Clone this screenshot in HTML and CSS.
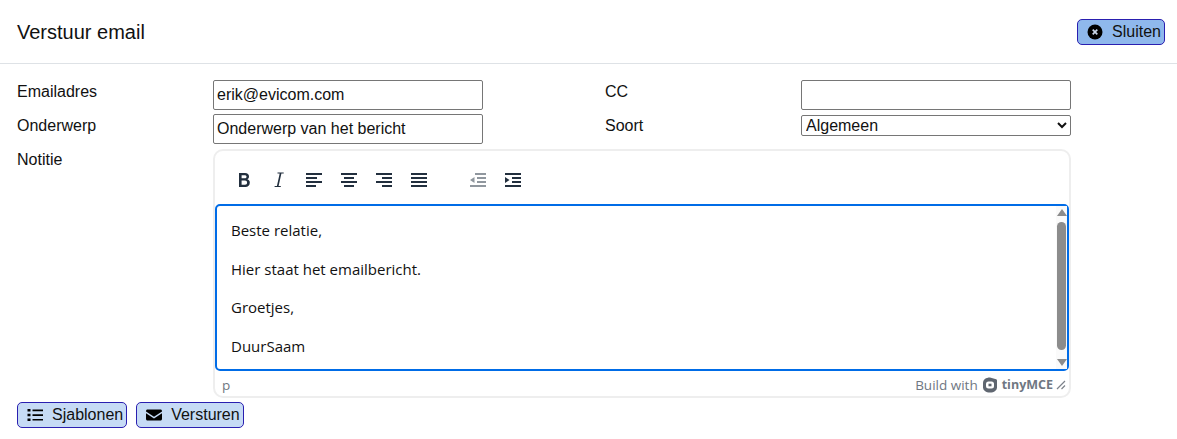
FILE: index.html
```html
<!DOCTYPE html>
<html lang="nl">

<head>
    <meta charset="UTF-8">
    <meta name="viewport" content="width=device-width, initial-scale=1.0">
    <title>Verstuur email</title>
    <link rel="stylesheet" href="styles.css">
</head>

<body>
    <header class="header">
        <h1 class="title">Verstuur email</h1>
        <button class="btn btn-close" type="button">
            <svg class="btn-icon" viewBox="0 0 16 16" width="16" height="16">
                <circle cx="8" cy="8" r="7.5" fill="#000" />
                <path d="M5.7 5.7l4.600 4.600M10.300 5.700l-4.600 4.600" stroke="#c9d6e8" stroke-width="1.700" fill="none" />
            </svg>
            Sluiten
        </button>
    </header>

    <form class="form">
        <label class="label">Emailadres</label>
        <input class="field" type="text" value="erik@evicom.com">
        <label class="label">CC</label>
        <input class="field" type="text">

        <label class="label">Onderwerp</label>
        <input class="field" type="text" value="Onderwerp van het bericht">
        <label class="label">Soort</label>
        <select class="field-select">
            <option>Algemeen</option>
        </select>

        <label class="label">Notitie</label>
        <div class="editor">
            <div class="toolbar">
                <div class="tool-group">
                    <span class="tool">
                        <svg viewBox="0 0 24 24" width="24" height="24"><path fill-rule="evenodd" d="M7 6h6c2.600 0 4 1.300 4 3.400 0 1.300-.6 2.300-1.700 2.800 1.500.5 2.500 1.600 2.500 3.200 0 2.800-1.700 4.600-4.500 4.600H7zM9.600 8.200v3.100h3c1.200 0 1.900-.6 1.900-1.600 0-1-.7-1.500-1.900-1.500zM9.600 13.500v4.300h3.400c1.300 0 2.100-.8 2.100-2.200 0-1.300-.8-2.100-2.100-2.100z" fill="#222f3e" /></svg>
                    </span>
                    <span class="tool">
                        <svg viewBox="0 0 24 24" width="24" height="24"><path d="M10.500 5.500h6.200v1h-2.300L11.600 19h2.200v1H7.600v-1h2.300l2.800-12.500h-2.200z" fill="#222f3e" /></svg>
                    </span>
                    <span class="tool">
                        <svg viewBox="0 0 24 24" width="24" height="24"><path d="M4 6h16v2H4zM4 10h11v2H4zM4 14h16v2H4zM4 18h10v2H4z" fill="#222f3e" /></svg>
                    </span>
                    <span class="tool">
                        <svg viewBox="0 0 24 24" width="24" height="24"><path d="M4 6h16v2H4zM7 10h10v2H7zM4 14h16v2H4zM7 18h10v2H7z" fill="#222f3e" /></svg>
                    </span>
                    <span class="tool">
                        <svg viewBox="0 0 24 24" width="24" height="24"><path d="M4 6h16v2H4zM10 10h10v2H10zM4 14h16v2H4zM10 18h10v2H10z" fill="#222f3e" /></svg>
                    </span>
                    <span class="tool">
                        <svg viewBox="0 0 24 24" width="24" height="24"><path d="M4 6h16v2H4zM4 10h16v2H4zM4 14h16v2H4zM4 18h16v2H4z" fill="#222f3e" /></svg>
                    </span>
                </div>
                <div class="tool-group">
                    <span class="tool">
                        <svg viewBox="0 0 24 24" width="24" height="24"><path d="M9 6h11v2H9zM11 10h9v2h-9zM11 14h9v2h-9zM4 18h16v2H4zM8.500 10v6L4 13z" fill="#222f3e" fill-opacity=".5" /></svg>
                    </span>
                    <span class="tool">
                        <svg viewBox="0 0 24 24" width="24" height="24"><path d="M4 6h16v2H4zM11 10h9v2h-9zM11 14h9v2h-9zM4 18h16v2H4zM4 10v6l4.500-3z" fill="#222f3e" /></svg>
                    </span>
                </div>
            </div>

            <div class="edit-area">
                <div class="edit-text">
                    <p>Beste relatie,</p>
                    <p>Hier staat het emailbericht.</p>
                    <p>Groetjes,</p>
                    <p>DuurSaam</p>
                </div>
                <div class="scrollbar">
                    <span class="arrow-up"></span>
                    <span class="thumb"></span>
                    <span class="arrow-down"></span>
                </div>
            </div>

            <div class="statusbar">
                <span class="path">p</span>
                <span class="brand">
                    Build with
                    <svg class="brand-logo" viewBox="0 0 16 16" width="16" height="16">
                        <path d="M8 .5 14.200 2.300c.5.2.8.6.8 1.200v6.700c0 3.100-2.800 5.300-7 5.300s-7-2.200-7-5.300V6C1 2.700 3.800.5 8 .5z" fill="#5f6670" />
                        <rect x="4" y="4.500" width="8" height="7" rx="2.500" fill="#fff" />
                        <rect x="6.500" y="6.700" width="3" height="2.600" fill="#5f6670" />
                    </svg>
                    <span class="brand-name">tinyMCE</span>
                </span>
                <svg class="resize" viewBox="0 0 10 10" width="10" height="10">
                    <path d="M1 9 9 1M5.500 9 9 5.500" stroke="#7c828a" stroke-width="1.200" fill="none" />
                </svg>
            </div>
        </div>
    </form>

    <div class="actions">
        <button class="btn" type="button">
            <svg class="btn-icon" viewBox="0 0 16 16" width="16" height="16">
                <path d="M.5 2h3v2.500h-3zM.5 6.800h3v2.500h-3zM.5 11.500h3V14h-3zM5.500 2.500H16v1.700H5.500zM5.500 7.200H16v1.700H5.500zM5.500 11.900H16v1.700H5.500z" fill="#000" />
            </svg>
            Sjablonen
        </button>
        <button class="btn" type="button">
            <svg class="btn-icon" viewBox="0 0 16 16" width="16" height="16">
                <path d="M1.500 2.500h13c.8 0 1.500.7 1.500 1.500v.4L8 9.700 0 4.400V4c0-.8.7-1.500 1.500-1.500zM0 6.200l8 5.200 8-5.200V12c0 .8-.7 1.500-1.500 1.500h-13C.7 13.500 0 12.800 0 12z" fill="#000" />
            </svg>
            Versturen
        </button>
    </div>
</body>

</html>
```

FILE: styles.css
```css
* {
    box-sizing: border-box;
}

body {
    margin: 0;
    background-color: #fff;
    color: #111;
    font-family: "Liberation Sans", Arial, sans-serif;
    font-size: 16px;
}

.header {
    display: flex;
    justify-content: space-between;
    align-items: center;
    height: 64px;
    padding: 0 12px 0 17px;
    border-bottom: 1px solid #dee2e6;
}

.title {
    margin: 0;
    padding-top: 2px;
    font-size: 20px;
    font-weight: 400;
}

.btn {
    display: inline-flex;
    align-items: center;
    gap: 9px;
    height: 26px;
    padding: 0 3px 0 9px;
    border: 1px solid #2a1fb0;
    border-radius: 5px;
    background-color: #c6dbf5;
    color: #111;
    font-family: inherit;
    font-size: 16px;
}

.btn-close {
    background-color: #8fb8ec;
}

.btn-icon {
    flex-shrink: 0;
}

.form {
    display: grid;
    grid-template-columns: 196px 270px 122px 196px 270px;
    grid-auto-rows: min-content;
    row-gap: 4px;
    padding: 16px 0 0 17px;
}

.form .label:nth-of-type(even) {
    grid-column: 4;
}

.label {
    padding-top: 3px;
}

.field {
    width: 100%;
    height: 30px;
    padding: 1px 3px;
    border: 1px solid #767676;
    border-radius: 2px;
    background-color: #fff;
    color: #111;
    font-family: inherit;
    font-size: 16px;
}

.field-select {
    width: 100%;
    height: 21px;
    margin-top: 1px;
    border: 1px solid #767676;
    border-radius: 2px;
    background-color: #fff;
    color: #111;
    font-family: inherit;
    font-size: 16px;
}

.editor {
    grid-column: 2 / 6;
    display: flex;
    flex-direction: column;
    width: 858px;
    height: 249px;
    margin-top: 1px;
    border: 2px solid #eee;
    border-radius: 10px;
    overflow: hidden;
}

.toolbar {
    display: flex;
    gap: 35px;
    height: 53px;
    padding: 16px 0 0 17px;
}

.tool-group {
    display: flex;
    gap: 11px;
}

.tool {
    display: block;
    width: 24px;
    height: 24px;
}

.tool svg {
    display: block;
}

.edit-area {
    display: flex;
    height: 167px;
    border: 2px solid #006ce7;
    border-radius: 5px;
}

.edit-text {
    flex: 1;
    padding: 15px 0 0 14px;
    font-family: "Open Sans", sans-serif;
    font-size: 15px;
    line-height: 19.5px;
}

.edit-text p {
    margin: 0 0 19px;
}

.scrollbar {
    display: flex;
    flex-direction: column;
    align-items: center;
    width: 11px;
    padding-top: 3px;
    background-color: #fafafa;
}

.arrow-up {
    width: 0;
    height: 0;
    border-left: 5px solid transparent;
    border-right: 5px solid transparent;
    border-bottom: 7px solid #8c8c8c;
}

.arrow-down {
    width: 0;
    height: 0;
    margin-bottom: 3px;
    border-left: 5px solid transparent;
    border-right: 5px solid transparent;
    border-top: 7px solid #8c8c8c;
}

.thumb {
    flex: 1;
    width: 9px;
    margin: 6px 0 9px;
    border-radius: 5px;
    background-color: #8c8c8c;
}

.statusbar {
    display: flex;
    align-items: center;
    flex: 1;
    padding: 2px 3px 0 7px;
    color: #6f7782;
    font-family: "Open Sans", sans-serif;
    font-size: 13.5px;
}

.path {
    margin-right: auto;
}

.brand {
    display: flex;
    align-items: center;
    gap: 4px;
}

.brand-logo {
    display: block;
}

.brand-name {
    font-size: 12.5px;
    font-weight: 700;
}

.resize {
    margin-left: 3px;
}

.actions {
    display: flex;
    gap: 9px;
    padding: 4px 0 0 17px;
}
```
